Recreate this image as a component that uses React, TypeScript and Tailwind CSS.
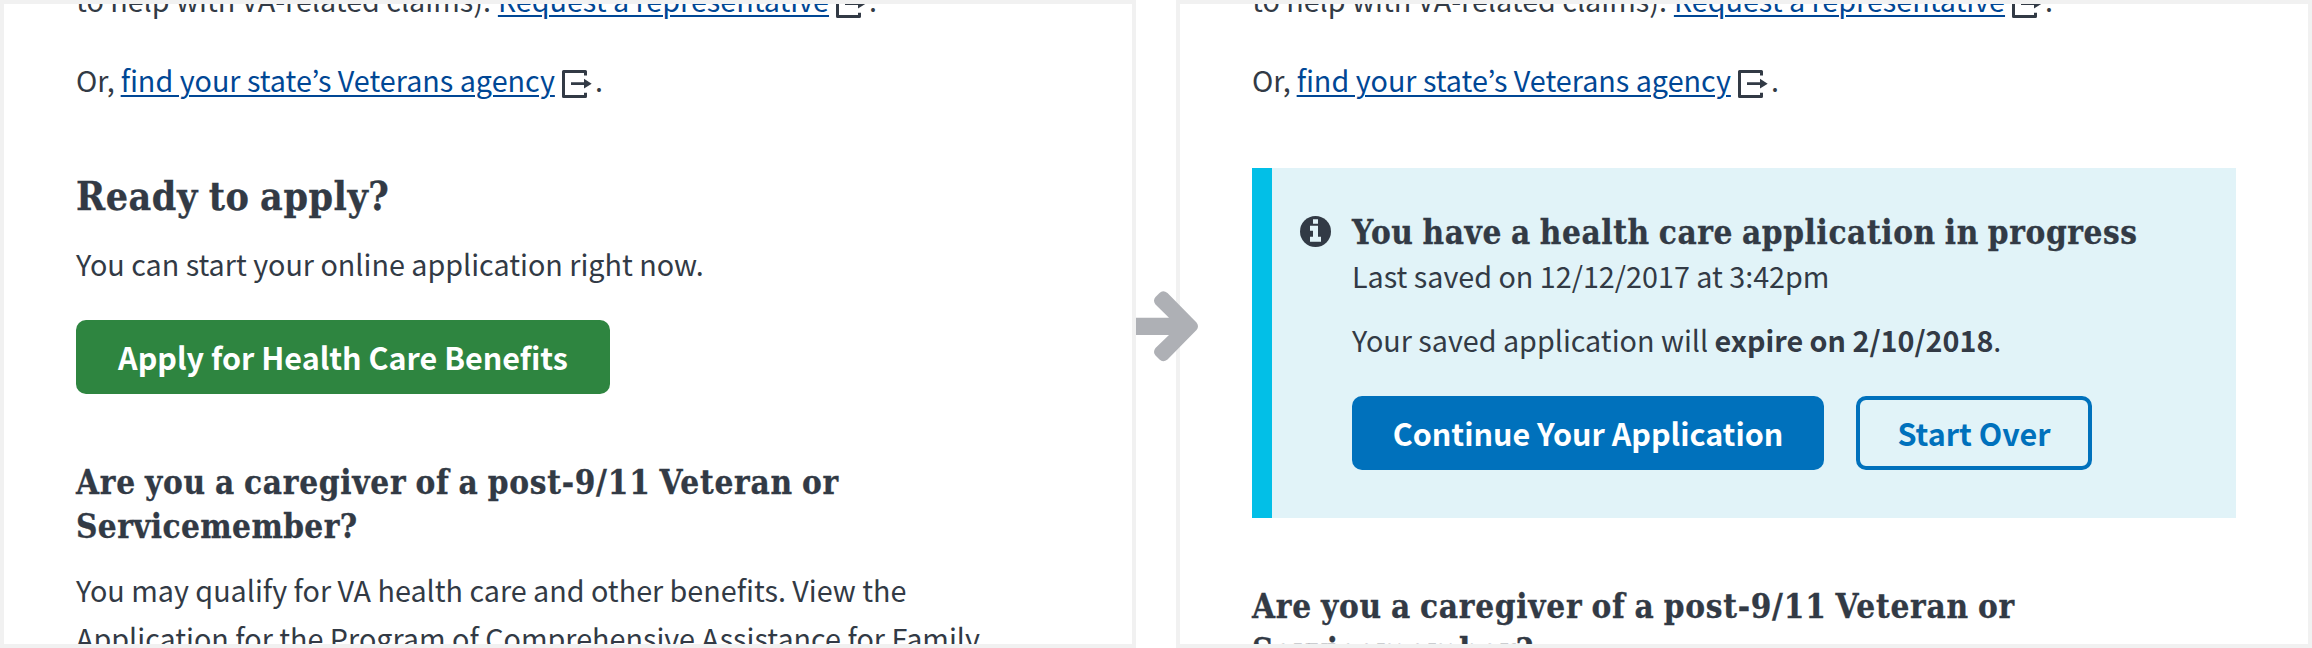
import React from 'react';

const bodyFont = "font-['Noto_Sans_CJK_KR','Noto_Sans',sans-serif] whitespace-nowrap";
const body = `${bodyFont} text-[28.72px] leading-[48px]`;
const button = `${bodyFont} flex h-[74px] items-center justify-center rounded-[10px] text-[30.5px] leading-[48px] font-bold`;
const slab = "font-['DejaVu_Serif_Condensed','DejaVu_Serif',serif] font-bold whitespace-nowrap [word-spacing:-2px] [-webkit-text-stroke:0.3px_#323a45]";

function ExitIcon() {
  return (
    <svg viewBox="0 0 30 28" className="mt-[14px] mr-[3px] ml-[7px] h-[28px] w-[30px] shrink-0" fill="#323a45">
      <path d="M1.500 0h22a1.500 1.500 0 0 1 1.500 1.500v4h-3V3H3v22h19v-2.300h3v3.800a1.500 1.500 0 0 1-1.500 1.500h-22a1.500 1.500 0 0 1-1.500-1.500v-25a1.500 1.500 0 0 1 1.500-1.500z" />
      <path d="M9 12.200h13V8.800l7.700 4.900L22 18.600v-3.500H9z" />
    </svg>
  );
}

function Resources() {
  return (
    <>
      <p className={`${body} -mt-[28px] flex`}>
        <span>to help with VA-related claims).</span>
        <a href="#" className="ml-[7px] text-[#004795] underline decoration-2 underline-offset-[3px]">Request a representative</a>
        <ExitIcon />
        <span>.</span>
      </p>
      <p className={`${body} mt-[32px] flex`}>
        <span>Or,</span>
        <a href="#" className="ml-[6px] text-[#004795] underline decoration-2 underline-offset-[3px]">find your state’s Veterans agency</a>
        <ExitIcon />
        <span>.</span>
      </p>
    </>
  );
}

function CaregiverHeading() {
  return (
    <h3 className={`${slab} text-[33px] leading-[44px] tracking-[0.75px]`}>
      <span className="block">Are you a caregiver of a post-9/11 Veteran or</span>
      <span className="block tracking-[0.4px]">Servicemember?</span>
    </h3>
  );
}

function InfoIcon() {
  return (
    <svg viewBox="0 0 31 31" className="mt-[48px] ml-[28px] h-[31px] w-[31px] shrink-0">
      <circle cx="15.5" cy="15.5" r="15.5" fill="#323a45" />
      <path fill="#e1f3f8" d="M13 3.300h5v4.400h-5zM10 9.800h8v11h3v5H10v-5h3v-6h-3z" />
    </svg>
  );
}

export default function App() {
  return (
    <div className="relative flex h-[648px] w-[2312px] justify-between overflow-hidden bg-white text-[#323a45]">
      <section className="h-full w-[1136px] overflow-hidden border-4 border-[#f1f1f1] pl-[72px]">
        <Resources />
        <h2 className={`${slab} mt-[67px] text-[39px] leading-[50px] tracking-[0.55px]`}>Ready to apply?</h2>
        <p className={`${body} mt-[19px]`}>You can start your online application right now.</p>
        <button className={`${button} mt-[32px] w-[534px] bg-[#2e8540] text-white`}>
          Apply for Health Care Benefits
        </button>
        <div className="mt-[67px]">
          <CaregiverHeading />
        </div>
        <p className={`${body} mt-[17px]`}>
          <span className="block">You may qualify for VA health care and other benefits. View the</span>
          <span className="block">Application for the Program of Comprehensive Assistance for Family</span>
        </p>
      </section>

      <section className="h-full w-[1136px] overflow-hidden border-4 border-[#f1f1f1] pl-[72px]">
        <Resources />
        <div className="mt-[64px] flex h-[350px] w-[984px] border-l-[20px] border-[#02bfe7] bg-[#e1f3f8]">
          <InfoIcon />
          <div className="ml-[21px] pt-[43px]">
            <h3 className={`${slab} text-[33px] leading-[44px] tracking-[0.62px]`}>You have a health care application in progress</h3>
            <p className={`${body} -mt-[3px]`}>Last saved on 12/12/2017 at 3:42pm</p>
            <p className={`${body} mt-[16px]`}>
              Your saved application will <strong className="font-bold">expire on 2/10/2018</strong>.
            </p>
            <div className="mt-[32px] flex gap-[32px]">
              <button className={`${button} w-[472px] bg-[#0071bc] text-white`}>
                Continue Your Application
              </button>
              <button className={`${button} w-[236px] border-4 border-[#0071bc] text-[#0071bc]`}>
                Start Over
              </button>
            </div>
          </div>
        </div>
        <div className="mt-[67px]">
          <CaregiverHeading />
        </div>
      </section>

      <svg viewBox="0 0 64 76" className="absolute top-[288px] left-[1136px] h-[76px] w-[64px]" fill="#aeb0b5">
        <path d="M0 29.700H33L19.500 16.500Q16.500 12.500 19.500 9L23.500 5Q27 1.500 31.500 5L60.500 34.500Q63.500 38.300 60.500 42L31.500 71.600Q27 75.100 23.500 71.600L19.500 67.600Q16.500 64.100 19.500 60.100L33 46.900H0z" />
      </svg>
    </div>
  );
}
